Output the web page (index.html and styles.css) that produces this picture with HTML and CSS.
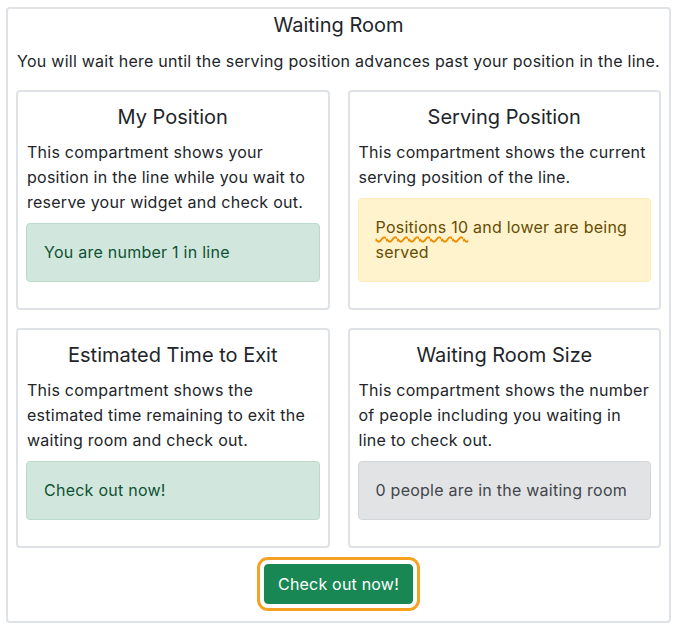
FILE: index.html
```html
<!DOCTYPE html>
<html lang="en">
<head>
<meta charset="utf-8">
<title>Waiting Room</title>
<link rel="stylesheet" href="styles.css">
</head>
<body>
<div class="room">
  <h1 class="room-title">Waiting Room</h1>
  <p class="room-lead">You will wait here until the serving position advances past your position in the line.</p>
  <div class="grid">
    <div class="card">
      <h2 class="card-title">My Position</h2>
      <p class="card-text">This compartment shows your position in the line while you wait to reserve your widget and check out.</p>
      <div class="alert alert-success">You are number 1 in line</div>
    </div>
    <div class="card">
      <h2 class="card-title">Serving Position</h2>
      <p class="card-text">This compartment shows the current serving position of the line.</p>
      <div class="alert alert-warning"><span class="squiggle">Positions 10</span> and lower are being served</div>
    </div>
    <div class="card">
      <h2 class="card-title">Estimated Time to Exit</h2>
      <p class="card-text">This compartment shows the estimated time remaining to exit the waiting room and check out.</p>
      <div class="alert alert-success">Check out now!</div>
    </div>
    <div class="card">
      <h2 class="card-title">Waiting Room Size</h2>
      <p class="card-text">This compartment shows the number of people including you waiting in line to check out.</p>
      <div class="alert alert-secondary">0 people are in the waiting room</div>
    </div>
  </div>
  <div class="actions">
    <button class="btn" type="button">Check out now!</button>
  </div>
</div>
</body>
</html>
```
FILE: styles.css
```css
* { box-sizing: border-box; }
html, body { margin: 0; padding: 0; background: #fff; }
body {
  font-family: Inter, "Liberation Sans", Arial, sans-serif;
  color: #212529;
  font-size: 16px;
  line-height: 25px;
  letter-spacing: 0.25px;
}
.room {
  margin: 7px 7px 0 6px;
  width: 665px;
  height: 616px;
  border: 2px solid #dfe2e6;
  border-radius: 4px;
  padding: 2px 8px 0 8px;
  display: flex;
  flex-direction: column;
}
.room-title {
  margin: 0;
  font-size: 20px;
  font-weight: 400;
  line-height: 28px;
  text-align: center;
  letter-spacing: 0;
}
.room-lead {
  margin: 10px 0 0;
  text-align: center;
  line-height: 25px;
  white-space: nowrap;
}
.grid {
  margin-top: 16px;
  display: grid;
  grid-template-columns: 1fr 1fr;
  gap: 18px;
}
.card {
  border: 2px solid #dfe2e6;
  border-radius: 4px;
  padding: 11px 8px 26px 8px;
  display: flex;
  flex-direction: column;
  min-height: 220px;
}
.card-title {
  margin: 0;
  font-size: 20px;
  font-weight: 400;
  line-height: 28px;
  text-align: center;
  letter-spacing: 0;
}
.card-text {
  margin: 9px 0 0;
  padding: 0 1px;
  line-height: 25px;
}
.alert {
  margin-top: 8px;
  border: 1px solid transparent;
  border-radius: 4px;
  padding: 16px 17px;
  line-height: 25px;
}
.alert-success { background: #d1e7dd; border-color: #badbcc; color: #0f5132; }
.alert-warning { background: #fff3cd; border-color: #ffecb5; color: #664d03; }
.alert-secondary { background: #e2e3e5; border-color: #d3d6d8; color: #41464b; }
.squiggle {
  text-decoration: underline wavy #f08c00;
  text-decoration-thickness: 1.5px;
  text-underline-offset: 3px;
}
.actions {
  display: flex;
  justify-content: center;
  margin-top: 16px;
}
.btn {
  font-family: inherit;
  font-size: 16px;
  line-height: 24px;
  letter-spacing: 0.2px;
  color: #fff;
  background: #198754;
  border: 1px solid #198754;
  border-radius: 4px;
  padding: 7px 8px;
  width: 149px;
  height: 40px;
  outline: 3px solid #f7a122;
  outline-offset: 4px;
}
```
